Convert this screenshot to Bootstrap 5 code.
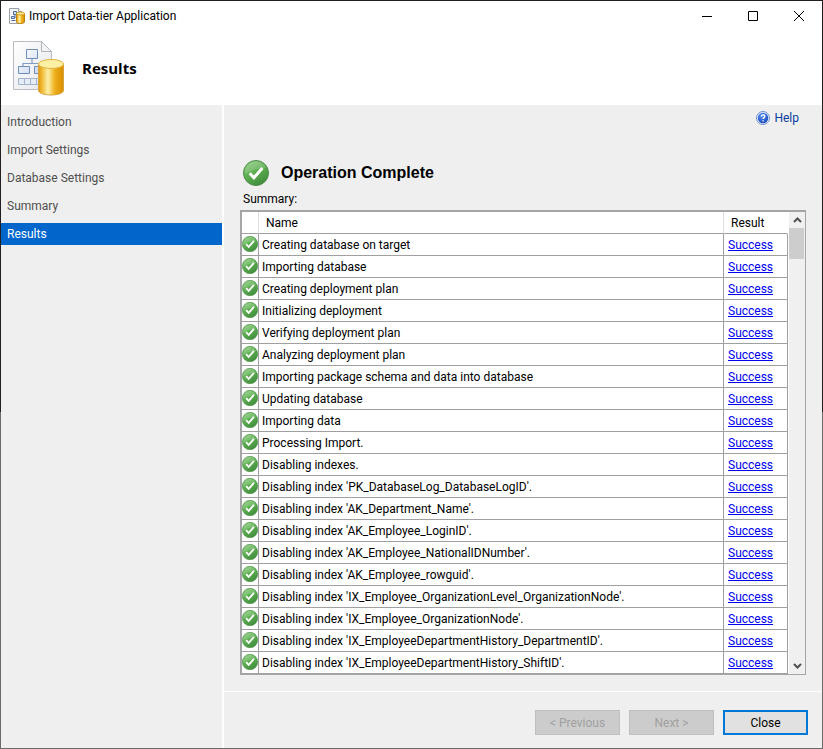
<!DOCTYPE html>
<html lang="en">
<head>
<meta charset="utf-8">
<meta name="viewport" content="width=device-width, initial-scale=1">
<title>Import Data-tier Application</title>
<link href="https://cdn.jsdelivr.net/npm/bootstrap@5.3.0/dist/css/bootstrap.min.css" rel="stylesheet">
<style>
body{font-family:Roboto,"Open Sans",sans-serif;font-size:12px;line-height:16px;color:#000;background:#efefef}
.window{min-height:100vh;padding:1px;background:linear-gradient(#231f20 55%,#6b6b6b 55%)}
.titlebar{height:30px;padding-left:8px}
.caption-btn{width:46px;height:29px;padding:0;border:0;background:transparent}
.banner{height:74px;padding:0 0 0 11px}
.banner h1{font:bold 15px/20px "Open Sans",sans-serif}
.surface{background:#efefef}
.sidebar{width:223px;border-right:2px solid #fff;padding-top:6px}
.step{height:22px;margin-bottom:6px;padding:3px 6px;color:#505050;text-decoration:none}
.step.current{background:#0066cc;color:#fff}
.help{color:#0a3ca0;text-decoration:none}
.content-area{padding:5px 16px 16px}
.help-row{padding-right:7px;margin-bottom:34px}
.status,.caption{padding-left:3px}
.status h2{font:bold 16px/20px "Liberation Sans",sans-serif}
.caption{padding-top:5px;padding-bottom:3px}
.grid-frame{border:1px solid #a5a5a8;border-width:2px 1px 1px 2px;background:#fff}
.results{border-collapse:separate;border-spacing:0;table-layout:fixed}
.results td,.results th{height:22px;padding:0 3px;border:solid #a0a0a0;border-width:0 1px 1px 0;font-weight:400;white-space:nowrap;overflow:hidden}
.results td:last-child{padding-left:4px}
.results th{padding:0 7px;border-right-color:#e0e0e0}
.results th:last-child{border-right-color:#fff}
.results td.state{padding:0}
.results td.state svg{display:block;margin-bottom:2px}
.results a{color:#0000ee}
.col-state{width:17px}
.col-result{width:64px}
.scroller{width:17px;background:#f0f0f0;border-left:1px solid #fff}
.scroller button{height:16px;width:16px;padding:0;border:0;background:transparent}
.thumb{height:31px;width:15px;background:#cdcdcd}
.footer-bar{gap:9px;border-top:1px solid #fff;padding:18px 14px 13px}
.footer-bar .btn{width:85px;height:25px;padding:0;border-radius:0;font-size:12px;line-height:16px;color:#000;background:#e1e1e1;border:2px solid #0078d7}
.footer-bar .btn:disabled{opacity:1;color:#a0a0a0;background:#cccccc;border:1px solid #bfbfbf}
</style>
<script src="https://cdn.jsdelivr.net/npm/bootstrap@5.3.0/dist/js/bootstrap.bundle.min.js"></script>
</head>
<body>
<svg width="0" height="0" class="position-absolute" aria-hidden="true">
<defs>
<linearGradient id="gGreen" x1="0" y1="0" x2=".6" y2="1"><stop offset="0" stop-color="#8fcf80"/><stop offset=".5" stop-color="#5fb053"/><stop offset="1" stop-color="#428f3d"/></linearGradient>
<linearGradient id="gGold" x1="0" x2="1"><stop offset="0" stop-color="#e0980c"/><stop offset=".12" stop-color="#f0b52c"/><stop offset=".38" stop-color="#fdf0a8"/><stop offset=".65" stop-color="#edb01c"/><stop offset="1" stop-color="#d98e00"/></linearGradient>
<linearGradient id="gPage" x1="0" y1="0" x2="1" y2="1"><stop offset="0" stop-color="#fff"/><stop offset="1" stop-color="#e4e6ea"/></linearGradient>
<linearGradient id="gBox" x1="0" y1="0" x2="1" y2="1"><stop offset="0" stop-color="#fff"/><stop offset="1" stop-color="#c3d3ee"/></linearGradient>
<radialGradient id="gBlue" cx=".4" cy=".3" r=".8"><stop offset="0" stop-color="#5b93f5"/><stop offset="1" stop-color="#0f3fb5"/></radialGradient>
<symbol id="ok" viewBox="0 0 26 26"><circle cx="13" cy="13" r="12.500" fill="url(#gGreen)" stroke="#4a8c46"/><path d="M2 14A11 11 0 0 1 23 8Q12 8 2 14Z" fill="#fff" opacity=".16"/><path d="M6.700 13.200l4.200 4.600L19.400 8" fill="none" stroke="#fff" stroke-width="3"/></symbol>
<symbol id="dac" viewBox="0 0 54 56">
<path d="M1.500 1.500h28l10 10v38h-38Z" fill="url(#gPage)" stroke="#b9bcc1"/>
<path d="M29.500 1.500v10h10Z" fill="#f2f3f5" stroke="#b0b3b8"/>
<path d="M20 18v6M11 27v-3.500h18V27" fill="none" stroke="#7f9bc8" stroke-width="1.200"/>
<g fill="url(#gBox)" stroke="#6f8cbb"><path d="M14.500 9.500h11v9h-11zM6.500 26.500h11v7h-11zM22.500 26.500h11v7h-11z"/></g>
<path d="M6.500 38.500h24v6h-24zM12.500 38.500v6M18.500 38.500v6M24.500 38.500v6" fill="#e6ecf5" stroke="#a5b4cd"/>
<path d="M26.500 24v26.500c0 2.500 5.700 4.500 12.500 4.500s12.500-2 12.500-4.500V24Z" fill="url(#gGold)" stroke="#d8a440"/>
<ellipse cx="39" cy="24" rx="12.500" ry="4.500" fill="#fbf0a4" stroke="#e2b240"/>
</symbol>
<symbol id="dacSmall" viewBox="0 0 16 16">
<path d="M.5.5h9l3 3v12h-12z" fill="#f5f6f8" stroke="#98a0ac"/>
<path d="M9.500.5v3h3" fill="#fff" stroke="#98a0ac"/>
<path d="M4.500 3.500h3v3h-3zM2.500 8.500h3v2h-3zM2.500 12.500h4M6 7v3" fill="#d4e0f2" stroke="#4d6da3"/>
<path d="M7.500 5.500v8.500c0 .8 1.800 1.500 4 1.500s4-.7 4-1.500V5.500Z" fill="url(#gGold)" stroke="#bd850e"/>
<ellipse cx="11.500" cy="5.500" rx="4" ry="1.500" fill="#fbee9c" stroke="#cf9a1c"/>
</symbol>
</defs>
</svg>

<div class="window d-flex flex-column">
<header class="bg-white">
<div class="titlebar d-flex align-items-center">
<svg width="16" height="16" class="me-1" aria-hidden="true"><use href="#dacSmall"/></svg>
<span class="flex-grow-1">Import Data-tier Application</span>
<button class="caption-btn" type="button" aria-label="Minimize"><svg width="12" height="12"><path d="M1 5.500h10" stroke="#000"/></svg></button>
<button class="caption-btn" type="button" aria-label="Maximize"><svg width="12" height="12"><path d="M1.500.5h9v9h-9z" fill="none" stroke="#000"/></svg></button>
<button class="caption-btn" type="button" aria-label="Close window"><svg width="12" height="12"><path d="M1 0l10 10M11 0L1 10" stroke="#000"/></svg></button>
</div>
<div class="banner d-flex align-items-center">
<svg width="54" height="56" aria-hidden="true"><use href="#dac"/></svg>
<h1 class="ms-3 mb-0">Results</h1>
</div>
</header>

<div class="d-flex flex-grow-1 surface">
<nav class="sidebar d-flex flex-column flex-shrink-0" aria-label="Wizard steps">
<a class="step" href="#">Introduction</a>
<a class="step" href="#">Import Settings</a>
<a class="step" href="#">Database Settings</a>
<a class="step" href="#">Summary</a>
<a class="step current" href="#" aria-current="step">Results</a>
</nav>

<main class="d-flex flex-column flex-grow-1">
<div class="content-area flex-grow-1">
<div class="help-row d-flex justify-content-end">
<a class="help d-flex align-items-center gap-1" href="#"><svg width="14" height="14" viewBox="0 0 14 14" aria-hidden="true"><circle cx="7" cy="7" r="6.500" fill="#e8eefa" stroke="#6f8fd0"/><circle cx="7" cy="7" r="5.200" fill="url(#gBlue)"/><path d="M5.200 5.500c0-2.200 3.600-2.200 3.600-.2 0 1.300-1.700 1.300-1.700 2.800M7.100 9.200v1.400" fill="none" stroke="#fff" stroke-width="1.400"/></svg>Help</a>
</div>
<div class="status d-flex align-items-center">
<svg width="26" height="26" aria-hidden="true"><use href="#ok"/></svg>
<h2 class="mb-0 ms-2 ps-1">Operation Complete</h2>
</div>
<div class="caption">Summary:</div>
<div class="grid-frame d-flex">
<table class="results flex-grow-1">
<colgroup><col class="col-state"><col><col class="col-result"></colgroup>
<thead><tr><th aria-label="State"></th><th>Name</th><th>Result</th></tr></thead>
<tbody>
<tr><td class="state"><svg width="16" height="16"><use href="#ok"/></svg></td><td>Creating database on target</td><td><a href="#">Success</a></td></tr>
<tr><td class="state"><svg width="16" height="16"><use href="#ok"/></svg></td><td>Importing database</td><td><a href="#">Success</a></td></tr>
<tr><td class="state"><svg width="16" height="16"><use href="#ok"/></svg></td><td>Creating deployment plan</td><td><a href="#">Success</a></td></tr>
<tr><td class="state"><svg width="16" height="16"><use href="#ok"/></svg></td><td>Initializing deployment</td><td><a href="#">Success</a></td></tr>
<tr><td class="state"><svg width="16" height="16"><use href="#ok"/></svg></td><td>Verifying deployment plan</td><td><a href="#">Success</a></td></tr>
<tr><td class="state"><svg width="16" height="16"><use href="#ok"/></svg></td><td>Analyzing deployment plan</td><td><a href="#">Success</a></td></tr>
<tr><td class="state"><svg width="16" height="16"><use href="#ok"/></svg></td><td>Importing package schema and data into database</td><td><a href="#">Success</a></td></tr>
<tr><td class="state"><svg width="16" height="16"><use href="#ok"/></svg></td><td>Updating database</td><td><a href="#">Success</a></td></tr>
<tr><td class="state"><svg width="16" height="16"><use href="#ok"/></svg></td><td>Importing data</td><td><a href="#">Success</a></td></tr>
<tr><td class="state"><svg width="16" height="16"><use href="#ok"/></svg></td><td>Processing Import.</td><td><a href="#">Success</a></td></tr>
<tr><td class="state"><svg width="16" height="16"><use href="#ok"/></svg></td><td>Disabling indexes.</td><td><a href="#">Success</a></td></tr>
<tr><td class="state"><svg width="16" height="16"><use href="#ok"/></svg></td><td>Disabling index 'PK_DatabaseLog_DatabaseLogID'.</td><td><a href="#">Success</a></td></tr>
<tr><td class="state"><svg width="16" height="16"><use href="#ok"/></svg></td><td>Disabling index 'AK_Department_Name'.</td><td><a href="#">Success</a></td></tr>
<tr><td class="state"><svg width="16" height="16"><use href="#ok"/></svg></td><td>Disabling index 'AK_Employee_LoginID'.</td><td><a href="#">Success</a></td></tr>
<tr><td class="state"><svg width="16" height="16"><use href="#ok"/></svg></td><td>Disabling index 'AK_Employee_NationalIDNumber'.</td><td><a href="#">Success</a></td></tr>
<tr><td class="state"><svg width="16" height="16"><use href="#ok"/></svg></td><td>Disabling index 'AK_Employee_rowguid'.</td><td><a href="#">Success</a></td></tr>
<tr><td class="state"><svg width="16" height="16"><use href="#ok"/></svg></td><td>Disabling index 'IX_Employee_OrganizationLevel_OrganizationNode'.</td><td><a href="#">Success</a></td></tr>
<tr><td class="state"><svg width="16" height="16"><use href="#ok"/></svg></td><td>Disabling index 'IX_Employee_OrganizationNode'.</td><td><a href="#">Success</a></td></tr>
<tr><td class="state"><svg width="16" height="16"><use href="#ok"/></svg></td><td>Disabling index 'IX_EmployeeDepartmentHistory_DepartmentID'.</td><td><a href="#">Success</a></td></tr>
<tr><td class="state"><svg width="16" height="16"><use href="#ok"/></svg></td><td>Disabling index 'IX_EmployeeDepartmentHistory_ShiftID'.</td><td><a href="#">Success</a></td></tr>
</tbody>
</table>
<div class="scroller d-flex flex-column flex-shrink-0">
<button type="button" class="d-flex align-items-center justify-content-center" aria-label="Scroll up"><svg width="9" height="6"><path d="M1 5l3.500-3.500L8 5" fill="none" stroke="#505050" stroke-width="2"/></svg></button>
<div class="thumb"></div>
<button type="button" class="mt-auto d-flex align-items-center justify-content-center" aria-label="Scroll down"><svg width="9" height="6"><path d="M1 1l3.500 3.500L8 1" fill="none" stroke="#505050" stroke-width="2"/></svg></button>
</div>
</div>
</div>
<div class="footer-bar d-flex justify-content-end">
<button type="button" class="btn" disabled>&lt; Previous</button>
<button type="button" class="btn" disabled>Next &gt;</button>
<button type="button" class="btn">Close</button>
</div>
</main>
</div>
</div>
</body>
</html>
